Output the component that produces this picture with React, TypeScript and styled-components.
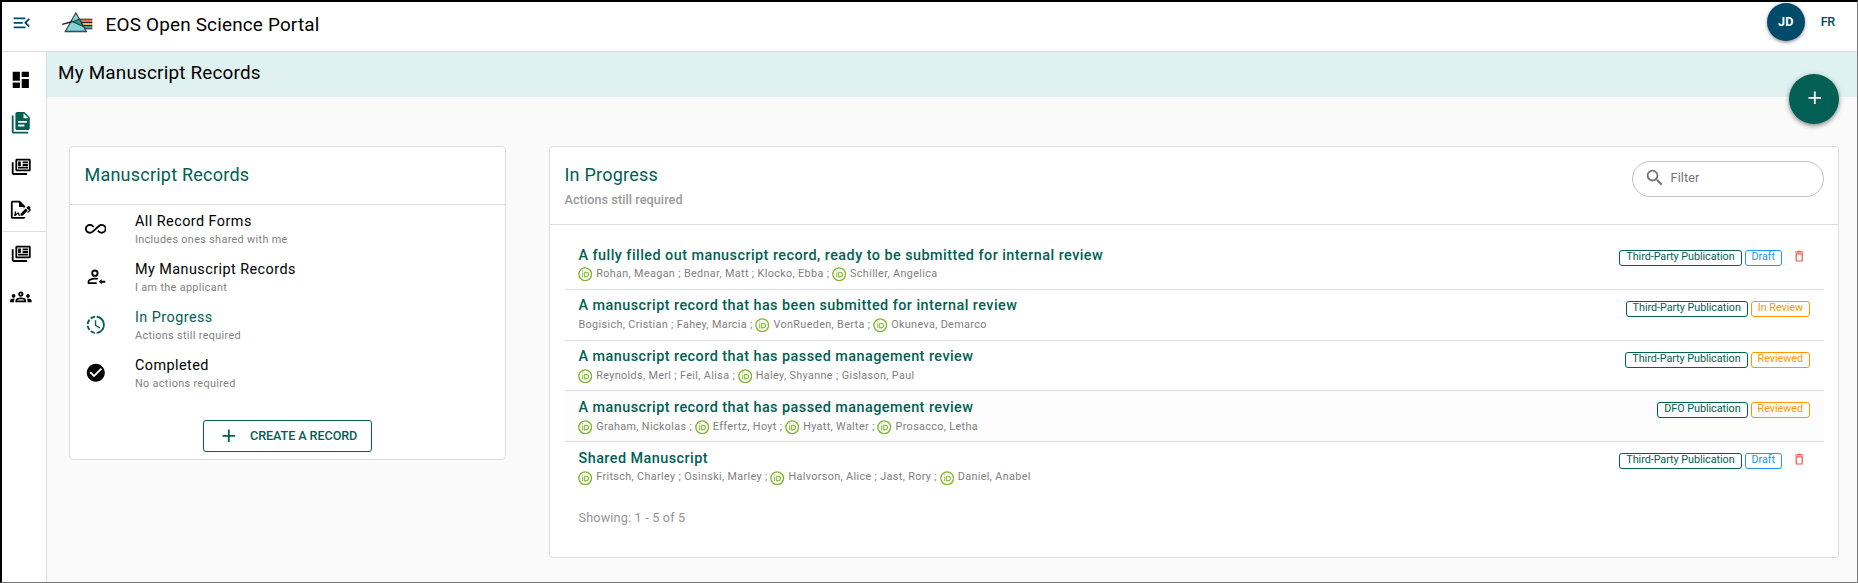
import React from "react";
import styled, { createGlobalStyle } from "styled-components";
import { MdOutlineGroups, MdSearch } from "react-icons/md";

const GlobalStyle = createGlobalStyle`
  *, *::before, *::after { box-sizing: border-box; }
  body {
    margin: 0;
    font-family: Roboto, "Liberation Sans", sans-serif;
    color: #000;
    background: #fafafa;
  }
`;

const palette = {
  primary: "#015f53",
  navy: "#004b69",
  line: "#dedede",
  caption: "#808080",
  blue: "#2196f3",
  orange: "#ff9800",
  red: "#f9504a",
};

const paths = {
  menuOpen:
    "M21,15.61L19.59,17L14.58,12L19.59,7L21,8.39L17.44,12L21,15.61M3,6H16V8H3V6M3,13V11H13V13H3M3,18V16H16V18H3Z",
  dashboard: "M13,3V9H21V3M13,21H21V11H13M3,21H11V15H3M3,13H11V3H3V13Z",
  documents:
    "M16 0H8C6.9 0 6 .9 6 2V18C6 19.1 6.9 20 8 20H20C21.1 20 22 19.1 22 18V6L16 0M9 10H19V12H9V10M16 16H9V14H16V16M15 7V1.5L20.5 7H15M4 4V22H20V24H4C2.9 24 2 23.1 2 22V4H4Z",
  news:
    "M4 7V19H19V21H4C2 21 2 19 2 19V7H4M21 5V15H8V5H21M21.3 3H7.7C6.76 3 6 3.7 6 4.55V15.45C6 16.31 6.76 17 7.7 17H21.3C22.24 17 23 16.31 23 15.45V4.55C23 3.7 22.24 3 21.3 3M9 6H12V11H9V6M20 14H9V12H20V14M20 8H14V6H20V8M20 11H14V9H20V11Z",
  sign:
    "M19.7 12.9L14 18.6H11.7V16.3L17.4 10.6L19.7 12.9M23.1 12.1C23.1 12.4 22.8 12.7 22.5 13L20 15.5L19.1 14.6L21.7 12L21.1 11.4L20.4 12.1L18.1 9.8L20.3 7.7C20.5 7.5 20.9 7.5 21.2 7.7L22.6 9.1C22.8 9.3 22.8 9.7 22.6 10C22.4 10.2 22.2 10.4 22.2 10.6C22.2 10.8 22.4 11 22.6 11.2C22.9 11.5 23.2 11.8 23.1 12.1M3 20V4H10V9H15V10.5L17 8.5V8L11 2H3C1.9 2 1 2.9 1 4V20C1 21.1 1.9 22 3 22H15C16.1 22 17 21.1 17 20H3M11 17.1C10.8 17.1 10.6 17.2 10.5 17.2L10 15H8.5L6.4 16.7L7 14H5.5L4.5 19H6L8.9 16.4L9.5 18.7H10.5L11 18.6V17.1Z",
  infinite:
    "M18.6,6.62C17.16,6.62 15.8,7.18 14.83,8.15L7.8,14.39C7.16,15.03 6.31,15.38 5.4,15.38C3.53,15.38 2,13.87 2,12C2,10.13 3.53,8.62 5.4,8.62C6.31,8.62 7.16,8.97 7.84,9.65L8.97,10.65L10.5,9.31L9.22,8.2C8.2,7.18 6.84,6.62 5.4,6.62C2.42,6.62 0,9.04 0,12C0,14.96 2.42,17.38 5.4,17.38C6.84,17.38 8.2,16.82 9.17,15.85L16.2,9.61C16.84,8.97 17.69,8.62 18.6,8.62C20.47,8.62 22,10.13 22,12C22,13.87 20.47,15.38 18.6,15.38C17.7,15.38 16.84,15.03 16.16,14.35L15,13.34L13.5,14.68L14.78,15.8C15.8,16.81 17.15,17.37 18.6,17.37C21.58,17.37 24,14.96 24,12C24,9 21.58,6.62 18.6,6.62Z",
  applicant:
    "M11,4A4,4 0 0,1 15,8A4,4 0 0,1 11,12A4,4 0 0,1 7,8A4,4 0 0,1 11,4M11,6A2,2 0 0,0 9,8A2,2 0 0,0 11,10A2,2 0 0,0 13,8A2,2 0 0,0 11,6M11,13C12.1,13 13.66,13.23 15.11,13.69L13.5,15.3C12.73,15.07 11.84,14.9 11,14.9C8.03,14.9 4.9,16.36 4.9,17V18.1H13V20H3V17C3,14.34 8.33,13 11,13M15.5,17.5L18.5,14.5V16.5H22.5V18.5H18.5V20.5L15.5,17.5Z",
  progress:
    "M13,2.03V2.05L13,4.05C17.39,4.59 20.5,8.58 19.96,12.97C19.5,16.61 16.64,19.5 13,19.93V21.93C18.5,21.38 22.5,16.5 21.95,11C21.5,6.25 17.73,2.5 13,2.03M11,2.06C9.05,2.25 7.19,3 5.67,4.26L7.1,5.74C8.22,4.84 9.57,4.26 11,4.06V2.06M4.26,5.67C3,7.19 2.25,9.04 2.05,11H4.05C4.24,9.58 4.8,8.23 5.69,7.1L4.26,5.67M2.06,13C2.26,14.96 3.03,16.81 4.27,18.33L5.69,16.9C4.81,15.77 4.24,14.42 4.06,13H2.06M7.1,18.37L5.67,19.74C7.18,21 9.04,21.79 11,22V20C9.58,19.82 8.23,19.25 7.1,18.37M12.5,7V12.25L17,14.92L16.25,16.15L11,13V7H12.5Z",
  done:
    "M12 2C6.5 2 2 6.5 2 12S6.5 22 12 22 22 17.5 22 12 17.5 2 12 2M10 17L5 12L6.41 10.59L10 14.17L17.59 6.58L19 8L10 17Z",
  plus: "M19,13H13V19H11V13H5V11H11V5H13V11H19V13Z",
  trash:
    "M6,19A2,2 0 0,0 8,21H16A2,2 0 0,0 18,19V7H6V19M8,9H16V19H8V9M15.5,4L14.5,3H9.5L8.5,4H5V6H19V4H15.5Z",
};

type IconName = keyof typeof paths;

const Icon = ({ name, size = 21.6 }: { name: IconName; size?: number }) => (
  <svg width={size} height={size} viewBox="0 0 24 24" fill="currentColor">
    <path d={paths[name]} />
  </svg>
);

const Frame = styled.div`
  display: flex;
  flex-direction: column;
  width: 100%;
  height: 583px;
  overflow: hidden;
  border: 1px solid #7a7a7a;
  border-top: 2px solid #000;
  border-left: 2px solid #000;
  border-bottom-color: #757575;
`;

const TopBar = styled.header`
  display: flex;
  height: 50px;
  padding: 0 22px 0 9px;
  background: #fff;
  border-bottom: 1px solid ${palette.line};
`;

const MenuButton = styled.button`
  display: flex;
  height: 21.6px;
  margin: 9.5px 0 0;
  padding: 0;
  border: 0;
  background: none;
  color: ${palette.navy};
`;

const LogoSlot = styled.div`
  margin: 9px 0 0 28px;
  height: 24px;
`;

const AppTitle = styled.div`
  margin-left: 13px;
  font-size: 18.9px;
  line-height: 46px;
  letter-spacing: 0.01em;
`;

const Avatar = styled.div`
  width: 38px;
  height: 38px;
  margin: 1px 16px 0 auto;
  border-radius: 50%;
  background: ${palette.navy};
  color: #fff;
  font-size: 12.6px;
  font-weight: 700;
  line-height: 37px;
  text-align: center;
  box-shadow: 0 1px 4px rgba(0, 0, 0, 0.3), 0 2px 2px rgba(0, 0, 0, 0.15);
`;

const Language = styled.div`
  color: ${palette.navy};
  font-size: 12.6px;
  font-weight: 500;
  line-height: 39px;
  letter-spacing: -0.3px;
`;

const Body = styled.div`
  display: flex;
  flex: 1;
  min-height: 0;
`;

const Rail = styled.nav`
  width: 45px;
  background: #fff;
  border-right: 1px solid ${palette.line};
`;

const RailGroup = styled.div`
  padding-top: 6.4px;
  & + & {
    padding-top: 0;
    border-top: 1px solid ${palette.line};
  }
`;

const RailItem = styled.div<{ $active?: boolean }>`
  display: flex;
  align-items: center;
  height: 43.2px;
  padding-left: 8.2px;
  color: ${(p) => (p.$active ? palette.primary : "#000")};
`;

const Main = styled.main`
  flex: 1;
  min-width: 0;
`;

const Banner = styled.div`
  display: flex;
  justify-content: space-between;
  height: 45px;
  padding: 0 18px 0 11px;
  background: #e0f1f1;
`;

const PageTitle = styled.h1`
  margin: 0;
  font-size: 18.9px;
  font-weight: 400;
  line-height: 42px;
  letter-spacing: 0.01em;
`;

const AddButton = styled.button`
  position: relative;
  top: 22px;
  display: flex;
  align-items: center;
  justify-content: center;
  width: 50px;
  height: 50px;
  padding: 0 0 3px 1px;
  border: 0;
  border-radius: 50%;
  background: ${palette.primary};
  color: #fff;
  box-shadow: 0 2px 4px rgba(0, 0, 0, 0.35), 0 1px 6px rgba(0, 0, 0, 0.15);
`;

const Columns = styled.div`
  display: flex;
  align-items: flex-start;
  justify-content: space-between;
  padding: 49px 18px 0 22px;
`;

const Card = styled.section<{ $width: number; $height: number }>`
  width: ${(p) => p.$width}px;
  height: ${(p) => p.$height}px;
  border: 1px solid ${palette.line};
  border-radius: 4px;
  background: #fff;
`;

const CardHead = styled.div<{ $height: number }>`
  display: flex;
  justify-content: space-between;
  height: ${(p) => p.$height}px;
  padding: 14px 14px 0 14.5px;
  border-bottom: 1px solid ${palette.line};
`;

const CardTitle = styled.h2`
  margin: 0;
  color: ${palette.primary};
  font-size: 18px;
  font-weight: 400;
  line-height: 27px;
  letter-spacing: 0.0125em;
`;

const CardSubtitle = styled.div`
  padding-top: 2px;
  color: #9a9a9a;
  font-size: 12.6px;
  font-weight: 500;
  line-height: 20px;
  letter-spacing: 0.00714em;
`;

const FilterItem = styled.div`
  display: flex;
  height: 48.2px;
  padding: 7.7px 14px 0 14.5px;
`;

const FilterIcon = styled.div<{ $active?: boolean }>`
  width: 50.5px;
  padding-top: 5px;
  color: ${(p) => (p.$active ? palette.primary : "#000")};
`;

const FilterName = styled.div<{ $active?: boolean }>`
  color: ${(p) => (p.$active ? palette.primary : "#000")};
  font-size: 14.4px;
  line-height: 18px;
  letter-spacing: 0.45px;
`;

const FilterCaption = styled.div`
  color: ${palette.caption};
  font-size: 10.8px;
  line-height: 17px;
  letter-spacing: 0.35px;
`;

const CreateButton = styled.button`
  display: flex;
  align-items: center;
  width: 169px;
  height: 32px;
  margin: 22px auto 0;
  padding: 0 0 0 14px;
  border: 1px solid ${palette.primary};
  border-radius: 3px;
  background: none;
  color: ${palette.primary};
  font: 500 12.6px/30px Roboto, "Liberation Sans", sans-serif;
  letter-spacing: -0.08px;
  white-space: nowrap;
  gap: 10.5px;
`;

const SearchBox = styled.div`
  display: flex;
  align-items: center;
  width: 192px;
  height: 36px;
  padding: 0 0 3px 10.5px;
  border: 1px solid #c2c2c2;
  border-radius: 18px;
  color: #757575;
  font-size: 12.6px;
  letter-spacing: 0.1px;
  gap: 5.5px;
`;

const RecordList = styled.div`
  padding: 14px 14px 0 14.5px;
`;

const RecordRow = styled.article<{ $shaded?: boolean }>`
  display: flex;
  justify-content: space-between;
  height: 50.8px;
  padding: 7.7px 14px 0;
  background: ${(p) => (p.$shaded ? "#fcfcfc" : "#fff")};
  border-bottom: 1px solid ${palette.line};
  &:last-of-type {
    border-bottom: 0;
  }
`;

const RecordTitle = styled.h3`
  margin: 0;
  color: ${palette.primary};
  font-size: 14.4px;
  font-weight: 500;
  line-height: 18px;
  letter-spacing: 0.46px;
`;

const Authors = styled.div`
  display: flex;
  align-items: center;
  height: 18px;
  color: ${palette.caption};
  font-size: 10.8px;
  letter-spacing: 0.36px;
  white-space: pre;
`;

const OrcidMark = styled.svg`
  width: 14.4px;
  height: 14.4px;
  margin: 2px 3.8px 0 -0.5px;
`;

const Tags = styled.div`
  display: flex;
  align-items: flex-start;
  padding-top: 3.3px;
  gap: 3px;
`;

const Tag = styled.span<{ $color: string }>`
  height: 16px;
  padding: 0 6px;
  border: 1px solid ${(p) => p.$color};
  border-radius: 3px;
  color: ${(p) => p.$color};
  font-size: 10.8px;
  line-height: 11.5px;
  letter-spacing: -0.05px;
`;

const DeleteButton = styled.button`
  display: flex;
  margin: -1px 3.6px 0 7px;
  padding: 0;
  border: 0;
  background: none;
  color: ${palette.red};
`;

const Summary = styled.div`
  padding: 15.5px 14px 0;
  color: #949494;
  font-size: 12.6px;
  line-height: 20px;
  letter-spacing: 0.2px;
`;

const Logo = () => (
  <svg width="32" height="24" viewBox="0 0 32 24">
    <path d="M18 8.4H31.4V11H19Z" fill="#e8705a" />
    <path d="M19 12H31.4V14H21Z" fill="#f3b350" />
    <path d="M21 15H31.4V17.4H23Z" fill="#3aa08c" />
    <path d="M18 8.2H31.4M20 11.5H31.4M21 14.5H31.4M22 17.8H31.4" stroke="#222" strokeWidth="1" />
    <path d="M14.9 1.8L4.4 20.3H25.2Z" fill="#86d3dc" stroke="#2a3b40" strokeWidth="1.1" strokeLinejoin="round" />
    <path d="M11.5 10.8L18.6 8L22 15.4Z" fill="#1e9c8b" stroke="#222" strokeWidth=".9" />
    <path d="M1.2 13.4L11.5 10.5" stroke="#222" strokeWidth="1.3" />
    <path d="M3.6 20.7H26" stroke="#444" strokeWidth="1.2" />
  </svg>
);

const Orcid = () => (
  <OrcidMark viewBox="0 0 14 14" fill="none" stroke="#83b52c">
    <circle cx="7" cy="7" r="6.2" strokeWidth="1.3" />
    <path d="M4.6 5.3V10M6.5 5.2V9.6H7.8C9.3 9.6 10.2 8.7 10.2 7.4S9.3 5.2 7.8 5.2H6.1" strokeWidth="1" />
    <circle cx="4.6" cy="3.8" r=".35" strokeWidth=".5" />
  </OrcidMark>
);

const filters: { icon: IconName; name: string; caption: string; active?: boolean }[] = [
  { icon: "infinite", name: "All Record Forms", caption: "Includes ones shared with me" },
  { icon: "applicant", name: "My Manuscript Records", caption: "I am the applicant" },
  { icon: "progress", name: "In Progress", caption: "Actions still required", active: true },
  { icon: "done", name: "Completed", caption: "No actions required" },
];

type Author = [name: string, orcid: boolean];
type Status = "Draft" | "In Review" | "Reviewed";

const records: { title: string; authors: Author[]; kind: string; status: Status; shaded?: boolean }[] = [
  {
    title: "A fully filled out manuscript record, ready to be submitted for internal review",
    authors: [["Rohan, Meagan", true], ["Bednar, Matt", false], ["Klocko, Ebba", false], ["Schiller, Angelica", true]],
    kind: "Third-Party Publication",
    status: "Draft",
  },
  {
    title: "A manuscript record that has been submitted for internal review",
    authors: [["Bogisich, Cristian", false], ["Fahey, Marcia", false], ["VonRueden, Berta", true], ["Okuneva, Demarco", true]],
    kind: "Third-Party Publication",
    status: "In Review",
  },
  {
    title: "A manuscript record that has passed management review",
    authors: [["Reynolds, Merl", true], ["Feil, Alisa", false], ["Haley, Shyanne", true], ["Gislason, Paul", false]],
    kind: "Third-Party Publication",
    status: "Reviewed",
  },
  {
    title: "A manuscript record that has passed management review",
    authors: [["Graham, Nickolas", true], ["Effertz, Hoyt", true], ["Hyatt, Walter", true], ["Prosacco, Letha", true]],
    kind: "DFO Publication",
    status: "Reviewed",
    shaded: true,
  },
  {
    title: "Shared Manuscript",
    authors: [["Fritsch, Charley", true], ["Osinski, Marley", false], ["Halvorson, Alice", true], ["Jast, Rory", false], ["Daniel, Anabel", true]],
    kind: "Third-Party Publication",
    status: "Draft",
  },
];

export default function App() {
  return (
    <>
      <GlobalStyle />
      <Frame>
        <TopBar>
          <MenuButton aria-label="Toggle menu"><Icon name="menuOpen" /></MenuButton>
          <LogoSlot><Logo /></LogoSlot>
          <AppTitle>EOS Open Science Portal</AppTitle>
          <Avatar>JD</Avatar>
          <Language>FR</Language>
        </TopBar>
        <Body>
          <Rail>
            <RailGroup>
              <RailItem><Icon name="dashboard" /></RailItem>
              <RailItem $active><Icon name="documents" /></RailItem>
              <RailItem><Icon name="news" /></RailItem>
              <RailItem><Icon name="sign" /></RailItem>
            </RailGroup>
            <RailGroup>
              <RailItem><Icon name="news" /></RailItem>
              <RailItem><MdOutlineGroups size={21.6} /></RailItem>
            </RailGroup>
          </Rail>
          <Main>
            <Banner>
              <PageTitle>My Manuscript Records</PageTitle>
              <AddButton aria-label="Add record"><Icon name="plus" /></AddButton>
            </Banner>
            <Columns>
              <Card $width={437} $height={314}>
                <CardHead $height={58}>
                  <CardTitle>Manuscript Records</CardTitle>
                </CardHead>
                {filters.map((f) => (
                  <FilterItem key={f.name}>
                    <FilterIcon $active={f.active}><Icon name={f.icon} /></FilterIcon>
                    <div>
                      <FilterName $active={f.active}>{f.name}</FilterName>
                      <FilterCaption>{f.caption}</FilterCaption>
                    </div>
                  </FilterItem>
                ))}
                <CreateButton><Icon name="plus" />CREATE A RECORD</CreateButton>
              </Card>
              <Card $width={1290} $height={412}>
                <CardHead $height={78}>
                  <div>
                    <CardTitle>In Progress</CardTitle>
                    <CardSubtitle>Actions still required</CardSubtitle>
                  </div>
                  <SearchBox><MdSearch size={21.6} />Filter</SearchBox>
                </CardHead>
                <RecordList>
                  {records.map((r, i) => (
                    <RecordRow key={i} $shaded={r.shaded}>
                      <div>
                        <RecordTitle>{r.title}</RecordTitle>
                        <Authors>
                          {r.authors.map(([name, orcid], n) => (
                            <React.Fragment key={name}>
                              {orcid && <Orcid />}
                              <span>{name}{n < r.authors.length - 1 ? " ; " : ""}</span>
                            </React.Fragment>
                          ))}
                        </Authors>
                      </div>
                      <Tags>
                        <Tag $color={palette.primary}>{r.kind}</Tag>
                        <Tag $color={r.status === "Draft" ? palette.blue : palette.orange}>{r.status}</Tag>
                        {r.status === "Draft" && (
                          <DeleteButton aria-label="Delete"><Icon name="trash" size={14.4} /></DeleteButton>
                        )}
                      </Tags>
                    </RecordRow>
                  ))}
                  <Summary>Showing: 1 - 5 of 5</Summary>
                </RecordList>
              </Card>
            </Columns>
          </Main>
        </Body>
      </Frame>
    </>
  );
}
